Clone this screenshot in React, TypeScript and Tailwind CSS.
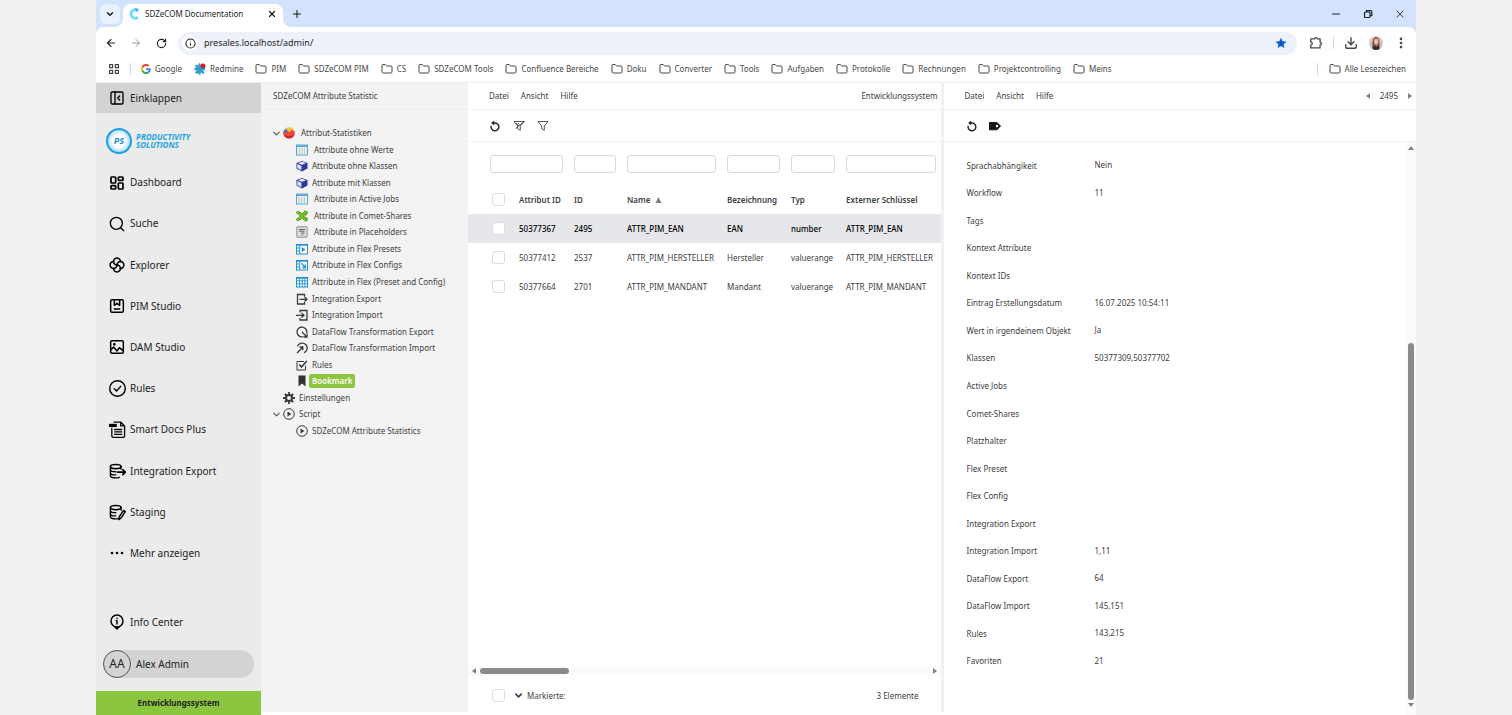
import React from 'react';
import {
    ArrowLeft,
    ArrowRight,
    ChevronDown,
    Download,
    EllipsisVertical,
    Folder,
    Info,
    LayoutDashboard,
    Minus,
    PanelLeftClose,
    Plus,
    RotateCw,
    X,
} from 'lucide-react';

type IconProps = { className?: string; children: React.ReactNode; strokeWidth?: number };

const Svg: React.FC<IconProps> = ({ className = 'w-4 h-4', strokeWidth = 2, children }) => (
    <svg
        viewBox="0 0 24 24"
        className={className}
        fill="none"
        stroke="currentColor"
        strokeWidth={strokeWidth}
        strokeLinecap="round"
        strokeLinejoin="round"
        aria-hidden="true"
    >
        {children}
    </svg>
);

/* ---------- Browser chrome ---------- */

const GoogleIcon = () => (
    <svg viewBox="0 0 48 48" className="w-[10px] h-[10px]" aria-hidden="true">
        <path fill="#ea4335" d="M24 9.5c3.5 0 6.7 1.2 9.2 3.6l6.9-6.9C35.9 2.4 30.5 0 24 0 14.6 0 6.5 5.4 2.6 13.2l8 6.2C12.4 13.7 17.7 9.5 24 9.5z" />
        <path fill="#4285f4" d="M47 24.5c0-1.6-.2-3.1-.4-4.5H24v9h13c-.6 3-2.3 5.5-4.8 7.2l7.7 6C44.4 38 47 31.8 47 24.5z" />
        <path fill="#fbbc05" d="M10.5 28.6c-.5-1.5-.8-3-.8-4.6s.3-3.1.8-4.6l-8-6.2C.9 16.5 0 20.1 0 24s.9 7.5 2.6 10.8z" />
        <path fill="#34a853" d="M24 48c6.5 0 11.9-2.1 15.9-5.8l-7.7-6c-2.2 1.5-4.9 2.3-8.2 2.3-6.3 0-11.6-4.2-13.5-9.9l-8 6.2C6.5 42.6 14.6 48 24 48z" />
    </svg>
);

const RedmineIcon = () => (
    <svg viewBox="0 0 24 24" className="w-3 h-3" aria-hidden="true">
        <g stroke="#2f9fd0" strokeWidth="5" strokeLinecap="round">
            <path d="M11 3v18M3 12h17M5 6l13 13M5 19 17 7" />
        </g>
        <circle cx="18" cy="6" r="5" fill="#d5202a" />
    </svg>
);

const FolderIcon = () => <Folder className="w-3 h-3 text-[#474747]" strokeWidth={2} />;

const bookmarks = [
    'PIM',
    'SDZeCOM PIM',
    'CS',
    'SDZeCOM Tools',
    'Confluence Bereiche',
    'Doku',
    'Converter',
    'Tools',
    'Aufgaben',
    'Protokolle',
    'Rechnungen',
    'Projektcontrolling',
    'Meins',
];

const BrowserBar: React.FC = () => (
    <header className="shrink-0 bg-[#d3e3fd] text-[#1f1f1f]">
        {/* Tab strip */}
        <div className="flex items-center h-[27px] pl-1 pr-[10px]">
            <button aria-label="Tabs durchsuchen" className="flex items-center justify-center w-5 h-5 rounded-md bg-[#e9f0fe]">
                <ChevronDown className="w-[10px] h-[10px]" strokeWidth={3.5} />
            </button>
            <div className="relative flex items-center self-end w-[160px] h-[23px] ml-[3px] pl-[6px] pr-[6px] pb-[3px] bg-white rounded-t-lg">
                <svg viewBox="0 0 8 8" className="absolute -left-2 bottom-0 w-2 h-2" aria-hidden="true">
                    <path d="M8 0v8H0a8 8 0 0 0 8-8z" fill="#fff" />
                </svg>
                <svg viewBox="0 0 8 8" className="absolute -right-2 bottom-0 w-2 h-2" aria-hidden="true">
                    <path d="M0 0v8h8a8 8 0 0 1-8-8z" fill="#fff" />
                </svg>
                <svg viewBox="0 0 24 24" className="w-3 h-3" fill="none" strokeWidth="6" aria-hidden="true">
                    <path d="M18 5.500a8.500 8.500 0 1 0 0 13" stroke="#74dcfa" />
                    <path d="M12 3.500A8.500 8.500 0 0 1 18 5.500" stroke="#3cc0ec" />
                </svg>
                <span className="ml-[4px] text-[8px] whitespace-nowrap">SDZeCOM Documentation</span>
                <button aria-label="Tab schließen" className="ml-auto">
                    <X className="w-[10px] h-[10px]" strokeWidth={3} />
                </button>
            </div>
            <button aria-label="Neuer Tab" className="ml-2">
                <Plus className="w-3 h-3" strokeWidth={2.2} />
            </button>
            <div className="flex items-center gap-5 ml-auto">
                <button aria-label="Minimieren">
                    <Minus className="w-3 h-3" />
                </button>
                <button aria-label="Verkleinern">
                    <svg viewBox="0 0 12 12" className="w-3 h-3" fill="none" stroke="currentColor" strokeWidth="1.2" aria-hidden="true">
                        <rect x="2.500" y="4" width="5.500" height="5.500" rx="1" />
                        <path d="M4.500 4V2.600h4.400l.9.900v4.200H8" />
                    </svg>
                </button>
                <button aria-label="Schließen">
                    <X className="w-3 h-3" strokeWidth={1.7} />
                </button>
            </div>
        </div>

        <div className="bg-white rounded-t-lg">
            {/* Address bar */}
            <div className="flex items-center gap-[9px] h-8 px-[7px]">
                <button aria-label="Zurück" className="flex justify-center w-4">
                    <ArrowLeft className="w-3 h-3" strokeWidth={2.2} />
                </button>
                <button aria-label="Vor" className="flex justify-center w-4 text-[#9b9b9b]">
                    <ArrowRight className="w-3 h-3" strokeWidth={2} />
                </button>
                <button aria-label="Neu laden" className="flex justify-center w-4">
                    <RotateCw className="w-[11px] h-[11px]" strokeWidth={2.5} />
                </button>
                <div className="flex items-center flex-1 h-[23px] pl-1 pr-[10px] rounded-full bg-[#edf1fa]">
                    <button aria-label="Website-Informationen" className="flex items-center justify-center w-4 h-4 rounded-full bg-white">
                        <Info className="w-[11px] h-[11px]" strokeWidth={2.2} />
                    </button>
                    <input
                        aria-label="Adresse"
                        defaultValue="presales.localhost/admin/"
                        className="flex-1 min-w-0 ml-[6px] text-[9px] bg-transparent outline-none"
                    />
                    <button aria-label="Lesezeichen bearbeiten">
                        <svg viewBox="0 0 24 24" className="w-3 h-3" fill="#0b57d0" aria-hidden="true">
                            <path d="m12 1.500 3.100 7.200 7.900.7-6 5.100 1.900 7.700L12 18.100l-6.900 4.100L7 14.500 1 9.400l7.900-.7z" />
                        </svg>
                    </button>
                </div>
                <button aria-label="Erweiterungen" className="flex justify-center w-4 ml-[2px] text-[#474747]">
                    <Svg className="w-[14px] h-[14px]" strokeWidth={2.2}>
                        <path d="M3 5h6.500a2.300 2.300 0 0 1 4.600 0H19v5.500a2.300 2.300 0 0 1 0 4.600V20.500H3V15.500a2.600 2.600 0 0 0 0-5.200z" />
                    </Svg>
                </button>
                <span className="w-px h-3 bg-[#c4d9fb]" />
                <button aria-label="Downloads" className="flex justify-center w-4 text-[#474747]">
                    <Download className="w-[14px] h-[14px]" strokeWidth={2.4} />
                </button>
                <button aria-label="Profil" className="flex justify-center w-4">
                    <svg viewBox="0 0 14 14" className="w-[14px] h-[14px]" aria-hidden="true">
                        <circle cx="7" cy="7" r="7" fill="#cfc8c6" />
                        <path d="M3.500 12.500C3 8 3 1.500 7.200 1.300 11 1.500 10.800 8 10.500 12.500z" fill="#8a5240" />
                        <ellipse cx="7.200" cy="5.600" rx="2.200" ry="2.900" fill="#e8bfad" />
                        <path d="M3.500 13c.5-3 1.800-3.700 3.700-3.700s3 .9 3.400 3.600A7 7 0 0 1 3.500 13z" fill="#2d2a33" />
                        <path d="m6.300 8.500.9 2.500.9-2.500z" fill="#e3b49f" />
                    </svg>
                </button>
                <button aria-label="Menü" className="flex justify-center w-4 text-[#474747]">
                    <EllipsisVertical className="w-[14px] h-[14px]" strokeWidth={2.5} />
                </button>
            </div>

            {/* Bookmarks */}
            <nav className="flex items-center h-5 pl-[13px] pr-[10px] mb-[3px] text-[8px] text-[#474747] whitespace-nowrap">
                <button aria-label="Apps">
                    <svg viewBox="0 0 10 10" className="w-[10px] h-[10px]" fill="none" stroke="currentColor" strokeWidth="1.2" aria-hidden="true">
                        <path d="M.6.6h3v3h-3zM6.400.6h3v3h-3zM.6 6.400h3v3h-3zM6.400 6.400h3v3h-3z" />
                    </svg>
                </button>
                <span className="w-px h-3 ml-[11px] mr-[10px] bg-[#c4d9fb]" />
                <div className="flex items-center gap-3">
                    <a href="#google" className="flex items-center gap-1">
                        <GoogleIcon />
                        Google
                    </a>
                    <a href="#redmine" className="flex items-center gap-1">
                        <RedmineIcon />
                        Redmine
                    </a>
                    {bookmarks.map((name) => (
                        <a key={name} href="#folder" className="flex items-center gap-1">
                            <FolderIcon />
                            {name}
                        </a>
                    ))}
                </div>
                <span className="w-px h-3 ml-auto mr-[11px] bg-[#c4d9fb]" />
                <a href="#alle" className="flex items-center gap-1">
                    <FolderIcon />
                    Alle Lesezeichen
                </a>
            </nav>
            <div className="h-px bg-[#ededed]" />
        </div>
    </header>
);

/* ---------- Main navigation ---------- */

const DatabaseStack = () => (
    <>
        <ellipse cx="9.500" cy="5" rx="7.500" ry="3" />
        <path d="M2 5v4.500c0 1.500 3 2.800 7.500 2.800M2 9.500V14c0 1.500 3 2.800 7.500 2.800M2 14v4c0 1.700 3.200 3 7.500 3 2 0 3.500-.3 5-.8M17 5v3.500" />
    </>
);

const navItems: { label: string; icon: React.ReactNode }[] = [
    { label: 'Dashboard', icon: <LayoutDashboard className="w-4 h-4" strokeWidth={2.6} /> },
    {
        label: 'Suche',
        icon: (
            <Svg className="w-4 h-4">
                <circle cx="11" cy="11" r="9" />
                <path d="m22 22-4.500-4.500" />
            </Svg>
        ),
    },
    {
        label: 'Explorer',
        icon: (
            <Svg className="w-4 h-4" strokeWidth={2.2}>
                <path d="M17.200 7.200A5.200 5.200 0 1 0 12 12" />
                <path d="M16.800 17.200A5.200 5.200 0 1 0 12 12" />
                <path d="M6.800 16.800A5.200 5.200 0 1 0 12 12" />
                <path d="M7.200 6.800A5.200 5.200 0 1 0 12 12" />
            </Svg>
        ),
    },
    {
        label: 'PIM Studio',
        icon: (
            <Svg className="w-4 h-4" strokeWidth={2.2}>
                <rect x="2.500" y="2.500" width="19" height="19" rx="2" />
                <path d="M8 3v8l4-3 4 3V3M8 16.500h8" />
            </Svg>
        ),
    },
    {
        label: 'DAM Studio',
        icon: (
            <Svg className="w-4 h-4" strokeWidth={2.2}>
                <rect x="2.500" y="2.500" width="19" height="19" rx="2" />
                <circle cx="8" cy="8" r="1" />
                <path d="m3 16 4-4 5 6 3.500-5 5.500 4.500" />
            </Svg>
        ),
    },
    {
        label: 'Rules',
        icon: (
            <Svg className="w-[17px] h-[17px]">
                <circle cx="12" cy="12" r="11" />
                <path d="m7.500 12.500 3.200 3 5.800-6.500" />
            </Svg>
        ),
    },
    {
        label: 'Smart Docs Plus',
        icon: (
            <Svg className="w-[17px] h-[17px]" strokeWidth={1.8}>
                <path d="M4 10v11a2 2 0 0 0 2 2h14a2 2 0 0 0 2-2V7l-5.500-5.500H7M16.500 1.500V7H22M8 12h10M8 15.500h10M8 19h10" />
                <path d="M0 4h11v4.500H0z" fill="currentColor" stroke="none" />
            </Svg>
        ),
    },
    {
        label: 'Integration Export',
        icon: (
            <Svg className="w-[17px] h-[17px]">
                <DatabaseStack />
                <path d="M12 13h11M19.500 9.500 23 13l-3.500 3.500" strokeWidth="2.400" />
            </Svg>
        ),
    },
    {
        label: 'Staging',
        icon: (
            <Svg className="w-[17px] h-[17px]">
                <DatabaseStack />
                <path d="m14 22 .5-4 6-9 2.500 1.800-6 9z" />
            </Svg>
        ),
    },
    {
        label: 'Mehr anzeigen',
        icon: (
            <svg viewBox="0 0 14 14" className="w-[14px] h-[14px]" fill="currentColor" aria-hidden="true">
                <circle cx="2" cy="7" r="1.300" />
                <circle cx="7" cy="7" r="1.300" />
                <circle cx="12" cy="7" r="1.300" />
            </svg>
        ),
    },
];

const NavLink: React.FC<{ label: string; icon: React.ReactNode }> = ({ label, icon }) => (
    <a href="#nav" className="flex items-center flex-1 min-h-0 pl-2">
        <span className="flex justify-center w-[26px] text-black">{icon}</span>
        {label}
    </a>
);

const Sidebar: React.FC = () => (
    <aside className="flex flex-col w-[165px] shrink-0 bg-[#ebebeb] text-[10px] text-[#222]">
        <button className="flex items-center h-[30px] pl-2 bg-[#d3d3d3]">
            <span className="flex justify-center w-[26px] text-black">
                <PanelLeftClose className="w-4 h-4" strokeWidth={2} />
            </span>
            Einklappen
        </button>
        <div className="flex items-center gap-1 h-[49px] pt-[7px] pl-[10px]">
            <span className="flex items-center justify-center w-[26px] h-[26px] rounded-full border-2 border-[#1b9fe0] bg-radial from-white from-40% to-[#4fbcf0] text-[9px] font-bold italic text-[#1b8fd0]">
                PS
            </span>
            <span className="flex flex-col font-['Open_Sans',sans-serif] text-[8px] leading-[8px] font-bold italic text-[#1ba4e4]">
                <span>PRODUCTIVITY</span>
                <span>SOLUTIONS</span>
            </span>
        </div>
        <nav className="flex flex-col flex-1 min-h-0">
            {navItems.map((item) => (
                <NavLink key={item.label} {...item} />
            ))}
        </nav>
        <div className="flex h-10 mt-7">
            <NavLink
                label="Info Center"
                icon={
                    <Svg className="w-4 h-4" strokeWidth={2.2}>
                        <circle cx="12" cy="10.500" r="9" />
                        <path d="M12 10v5M11 10h1M12 6.500v.1" />
                        <path d="M7 19 12 24l5-5z" fill="currentColor" stroke="none" />
                    </Svg>
                }
            />
        </div>
        <button className="flex items-center gap-[5px] h-7 mt-2 mb-[13px] ml-[7px] mr-[7px] rounded-full bg-[#d3d3d3]">
            <span className="flex items-center justify-center w-7 h-7 rounded-full border border-[#555] text-[12px]">AA</span>
            Alex Admin
        </button>
        <div className="flex items-center justify-center h-6 bg-[#8cc63e] text-[8px] font-bold">Entwicklungssystem</div>
    </aside>
);

/* ---------- Tree ---------- */

const BlueTable: React.FC<{ children?: React.ReactNode }> = ({ children }) => (
    <svg viewBox="0 0 12 12" className="w-3 h-3" fill="none" stroke="#2191d0" aria-hidden="true">
        <rect x=".5" y="1.500" width="11" height="9.500" fill="#fff" />
        <path d="M.5 2h11" strokeWidth="1.400" />
        {children}
    </svg>
);

const CalendarIcon: React.FC<{ colored?: boolean }> = ({ colored }) => (
    <svg viewBox="0 0 12 12" className="w-3 h-3" fill="none" aria-hidden="true">
        <rect x=".5" y="1" width="11" height="10" fill="#eaf4fa" stroke="#5fa4cf" />
        <path d="M.5 2.200h11" stroke="#4a9bd0" strokeWidth="1.500" />
        {colored ? (
            <>
                <path d="M2.500 5h7" stroke="#e2873c" strokeDasharray="1.200 1.500" strokeWidth="1.200" />
                <path d="M2.500 7h7" stroke="#8c7bd0" strokeDasharray="1.200 1.500" strokeWidth="1.200" />
                <path d="M2.500 9h7" stroke="#6bb64f" strokeDasharray="1.200 1.500" strokeWidth="1.200" />
            </>
        ) : (
            <>
                <path d="M3.500 4v6.500M6 4v6.500M8.500 4v6.500" stroke="#a5bcc9" strokeWidth=".8" />
                <path d="M1 5h10M1 7h10M1 9h10" stroke="#d4ddbd" strokeWidth=".6" />
            </>
        )}
    </svg>
);

const CubeIcon = () => (
    <svg viewBox="0 0 12 12" className="w-3 h-3" aria-hidden="true">
        <path d="M6 1 11.500 3v5.500L6 11.500.5 8.500V3z" fill="#2c3a9e" />
        <path d="M6 1.800 10 3.200 6 4.800 2 3.200z" fill="#eef0fb" />
        <path d="M1.300 4 5.400 5.700v4.600L1.300 8z" fill="#dfe3f6" />
    </svg>
);

const PieIcon = () => (
    <svg viewBox="0 0 12 12" className="w-3 h-3" aria-hidden="true">
        <path d="M.5 4.500v2.800C.8 10 3 11.500 6 11.500s5.200-1.500 5.500-4.200V4.500z" fill="#c9251f" />
        <ellipse cx="6" cy="5.500" rx="5.500" ry="3.800" fill="#f0483c" />
        <path d="M6 5.500 2.300 1.300C4.500-.2 8-.2 10.200 1.500z" fill="#f7c930" />
        <path d="M6 5.500.6 5C.6 3.500 1.500 2.500 2.700 2z" fill="#3f74c9" />
    </svg>
);

const CometIcon = () => (
    <svg viewBox="0 0 12 12" className="w-3 h-3" fill="none" strokeLinecap="round" aria-hidden="true">
        <path d="M1.800 2.500C5 2.500 7 9.500 10.200 9.500M1.800 9.500C5 9.500 7 2.500 10.200 2.500" stroke="#3f8f12" strokeWidth="3" />
        <path d="m9 1 2.200 1.600L9.500 5M9 7.200l2.200 1.600L9.500 11" stroke="#4fa51a" strokeWidth="1.400" />
        <path d="M1.800 2.500C5 2.500 7 9.500 10.200 9.500M1.800 9.500C5 9.500 7 2.500 10.200 2.500" stroke="#82cc2b" strokeWidth="1.600" />
    </svg>
);

const PlaceholderIcon = () => (
    <svg viewBox="0 0 12 12" className="w-3 h-3" fill="none" stroke="#8f8f8f" aria-hidden="true">
        <rect x=".8" y=".8" width="10.400" height="10.400" rx=".5" fill="#dcdcdc" />
        <path d="M3 3.500h6M3 5.200h5.500M5 7h3.500M5.500 9h1.500" stroke="#666" />
    </svg>
);

const PlayIcon = () => (
    <svg viewBox="0 0 12 12" className="w-3 h-3" fill="none" stroke="#3a3a3a" aria-hidden="true">
        <circle cx="6" cy="6" r="5.300" />
        <path d="M4.500 3.500 8.500 6 4.500 8.500z" fill="#3a3a3a" stroke="none" />
    </svg>
);

const GearIcon = () => (
    <svg viewBox="0 0 12 12" className="w-3 h-3" fill="none" stroke="#3a3a3a" aria-hidden="true">
        <circle cx="6" cy="6" r="3" strokeWidth="2" />
        <path d="M6 0v2.500M6 9.500V12M0 6h2.500M9.500 6H12M1.800 1.800l1.700 1.700M8.500 8.500l1.700 1.700M1.800 10.200l1.700-1.700M8.500 3.500l1.700-1.700" strokeWidth="1.800" />
    </svg>
);

const Dark: React.FC<{ children: React.ReactNode }> = ({ children }) => (
    <svg viewBox="0 0 12 12" className="w-3 h-3" fill="none" stroke="#3a3a3a" strokeWidth="1.300" aria-hidden="true">
        {children}
    </svg>
);

type TreeItem = { label: string; icon: React.ReactNode; root?: boolean; open?: boolean; wide?: boolean; active?: boolean };

const treeItems: TreeItem[] = [
    { label: 'Attribut-Statistiken', icon: <PieIcon />, root: true, open: true, wide: true },
    { label: 'Attribute ohne Werte', icon: <CalendarIcon />, wide: true },
    { label: 'Attribute ohne Klassen', icon: <CubeIcon /> },
    { label: 'Attribute mit Klassen', icon: <CubeIcon /> },
    { label: 'Attribute in Active Jobs', icon: <CalendarIcon colored />, wide: true },
    { label: 'Attribute in Comet-Shares', icon: <CometIcon />, wide: true },
    { label: 'Attribute in Placeholders', icon: <PlaceholderIcon />, wide: true },
    {
        label: 'Attribute in Flex Presets',
        icon: (
            <BlueTable>
                <path d="M3.700 2v9M.5 5h3M.5 8h3" />
                <path d="M5.800 4 9.500 6.500 5.800 9z" fill="#2191d0" stroke="none" />
            </BlueTable>
        ),
    },
    {
        label: 'Attribute in Flex Configs',
        icon: (
            <BlueTable>
                <path d="M3.700 2v9M.5 5h3M.5 8h3" />
                <path d="M5.500 4.200 9 8.500M9.300 5.500v3.300H6" strokeWidth="1.300" />
            </BlueTable>
        ),
    },
    {
        label: 'Attribute in Flex (Preset and Config)',
        icon: (
            <BlueTable>
                <path d="M3.500 2v9M6.200 2v9M8.900 2v9M.5 4.800h11M.5 7.800h11" strokeWidth=".9" />
            </BlueTable>
        ),
    },
    {
        label: 'Integration Export',
        icon: (
            <Dark>
                <path d="M8.500 3.500v-2H1.500v9.500h7V9M3.500 6.300h7M8.500 4l2.500 2.300-2.500 2.300" />
            </Dark>
        ),
    },
    {
        label: 'Integration Import',
        icon: (
            <Dark>
                <path d="M4 3.500v-2h7v9.500H4V9M0 6.300h7.500M5.500 4 8 6.300 5.500 8.600" />
            </Dark>
        ),
    },
    {
        label: 'DataFlow Transformation Export',
        icon: (
            <Dark>
                <path d="M7 10.700A4.900 4.900 0 1 1 10.700 7M6 6l4.500 4.500M11 7.500V11H7.500" />
            </Dark>
        ),
    },
    {
        label: 'DataFlow Transformation Import',
        icon: (
            <Dark>
                <path d="M1.500 4.200A5 5 0 1 1 8 10.700M1 11l5.500-5.500M3.500 5h3.300v3.300" />
            </Dark>
        ),
    },
    {
        label: 'Rules',
        icon: (
            <Dark>
                <path d="M9.500 6.500V11h-8.500V2.500h7" strokeWidth="1" />
                <path d="M3.300 5.500 5.500 8l5.300-6" strokeWidth="1.600" />
            </Dark>
        ),
    },
    {
        label: 'Bookmark',
        active: true,
        icon: (
            <svg viewBox="0 0 12 12" className="w-3 h-3" fill="#333" aria-hidden="true">
                <path d="M2.500.5h7v11L6 8.500l-3.500 3z" />
            </svg>
        ),
    },
    { label: 'Einstellungen', icon: <GearIcon />, root: true },
    { label: 'Script', icon: <PlayIcon />, root: true, open: true },
    { label: 'SDZeCOM Attribute Statistics', icon: <PlayIcon /> },
];

const Tree: React.FC = () => (
    <section className="w-[207px] shrink-0 bg-[#f3f3f3] mb-[3px]">
        <h1 className="flex items-center h-[27px] pl-3 mr-1 border-b border-[#ebebeb]">SDZeCOM Attribute Statistic</h1>
        <ul className="grid auto-rows-fr h-[314px] mt-[15px]">
            {treeItems.map((item) => (
                <li key={item.label} className={item.root ? 'flex items-center pl-[10px]' : 'flex items-center pl-[35px]'}>
                    {item.root && (
                        <span className="w-3">{item.open && <ChevronDown className="w-[11px] h-[11px] text-[#555]" strokeWidth={2.5} />}</span>
                    )}
                    {item.icon}
                    <button
                        className={
                            item.active
                                ? 'ml-px px-[3px] h-[14px] rounded-xs bg-[#8cc63e] text-white font-semibold'
                                : item.wide
                                  ? 'ml-[6px]'
                                  : 'ml-1'
                        }
                    >
                        {item.label}
                    </button>
                </li>
            ))}
        </ul>
    </section>
);

/* ---------- Attribute table ---------- */

const MenuBar: React.FC<{ children: React.ReactNode }> = ({ children }) => (
    <div className="flex items-center gap-3 h-[27px] pl-[21px] pr-[3px] border-b border-[#f1f1f1]">
        <button>Datei</button>
        <button>Ansicht</button>
        <button>Hilfe</button>
        {children}
    </div>
);

const ReloadIcon = () => (
    <svg viewBox="0 0 12 12" className="w-3 h-3" fill="none" stroke="#222" strokeWidth="1.400" aria-hidden="true">
        <path d="M2.200 5.800A3.900 3.900 0 1 0 6 3H4" />
        <path d="M5.200.5v5L2.200 3z" fill="#222" stroke="none" />
    </svg>
);

const FilterIcon: React.FC<{ off?: boolean }> = ({ off }) => (
    <svg viewBox="0 0 12 12" className="w-3 h-3" fill="none" stroke="#444" strokeWidth=".9" strokeLinejoin="round" aria-hidden="true">
        <path d="M1 1.500h10L7.300 6v4.200l-2.600-1.400V6z" />
        {off && <path d="M2.500 8.500 11.500 1.500M3 3l2.500 2.500M5 3l1.500 1.500" />}
    </svg>
);

const columns = ['Attribut ID', 'ID', 'Name', 'Bezeichnung', 'Typ', 'Externer Schlüssel'];

const rows = [
    ['50377367', '2495', 'ATTR_PIM_EAN', 'EAN', 'number', 'ATTR_PIM_EAN'],
    ['50377412', '2537', 'ATTR_PIM_HERSTELLER', 'Hersteller', 'valuerange', 'ATTR_PIM_HERSTELLER'],
    ['50377664', '2701', 'ATTR_PIM_MANDANT', 'Mandant', 'valuerange', 'ATTR_PIM_MANDANT'],
];

const Checkbox: React.FC<{ label: string }> = ({ label }) => (
    <input type="checkbox" aria-label={label} className="block appearance-none w-[13px] h-[13px] rounded-[3px] border border-[#dcdce0] bg-white" />
);

const Triangle: React.FC<{ d: string; className?: string }> = ({ d, className = 'w-[6px] h-[6px] shrink-0' }) => (
    <svg viewBox="0 0 6 6" className={className} fill="#808080" aria-hidden="true">
        <path d={d} />
    </svg>
);

const AttributeTable: React.FC = () => (
    <section className="flex flex-col flex-1 min-w-0 bg-white">
        <MenuBar>
            <span className="ml-auto">Entwicklungssystem</span>
        </MenuBar>
        <div className="flex items-center gap-3 h-8 pl-[21px] border-b border-[#f1f1f1]">
            <button aria-label="Neu laden"><ReloadIcon /></button>
            <button aria-label="Filter löschen"><FilterIcon off /></button>
            <button aria-label="Filtern"><FilterIcon /></button>
        </div>
        <table className="w-full table-fixed text-left whitespace-nowrap">
            <colgroup>
                <col className="w-[51px]" />
                <col className="w-[55px]" />
                <col className="w-[53px]" />
                <col className="w-[100px]" />
                <col className="w-[64px]" />
                <col className="w-[55px]" />
                <col />
            </colgroup>
            <thead>
                <tr className="h-[43px]">
                    {columns.map((column, index) => (
                        <td key={column} colSpan={index === 0 ? 2 : 1} className={index === 0 ? 'pl-[22px] pr-[11px]' : index === 5 ? 'pr-[5px]' : 'pr-[11px]'}>
                            <input aria-label={`Filter ${column}`} className="block w-full h-[18px] px-1 rounded-[3px] border border-[#d9d9dc] outline-none" />
                        </td>
                    ))}
                </tr>
                <tr className="h-[29px]">
                    <td className="pl-6"><Checkbox label="Alle auswählen" /></td>
                    {columns.map((column) => (
                        <th key={column} className="font-semibold">
                            {column}
                            {column === 'Name' && <Triangle d="M0 6h6L3 0z" className="inline w-[7px] h-[6px] ml-[5px]" />}
                        </th>
                    ))}
                </tr>
            </thead>
            <tbody>
                {rows.map((row, index) => (
                    <tr key={row[0]} className={index === 0 ? 'h-[29px] bg-[#e6e7eb] text-black font-medium' : 'h-[29px]'}>
                        <td className="pl-6"><Checkbox label={`${row[0]} auswählen`} /></td>
                        {row.map((cell, i) => (
                            <td key={i}>{cell}</td>
                        ))}
                    </tr>
                ))}
            </tbody>
        </table>
        <div className="flex items-center gap-[6px] h-[10px] mt-auto px-[3px] bg-[#fbfbfb]">
            <Triangle d="M5 0v6L1 3z" />
            <div className="flex-1 h-[6px] -ml-[3px]">
                <div className="w-1/5 h-full rounded-full bg-[#8b8b8b]" />
            </div>
            <Triangle d="M1 0v6l4-3z" />
        </div>
        <div className="flex items-center h-[39px] pl-6 pr-[22px]">
            <Checkbox label="Markierte auswählen" />
            <button className="flex items-center gap-[3px] ml-2">
                <ChevronDown className="w-[11px] h-[11px]" strokeWidth={3.5} />
                Markierte:
            </button>
            <span className="ml-auto">3 Elemente</span>
        </div>
    </section>
);

/* ---------- Detail panel ---------- */

const details: [string, string][] = [
    ['Sprachabhängikeit', 'Nein'],
    ['Workflow', '11'],
    ['Tags', ''],
    ['Kontext Attribute', ''],
    ['Kontext IDs', ''],
    ['Eintrag Erstellungsdatum', '16.07.2025 10:54:11'],
    ['Wert in irgendeinem Objekt', 'Ja'],
    ['Klassen', '50377309,50377702'],
    ['Active Jobs', ''],
    ['Comet-Shares', ''],
    ['Platzhalter', ''],
    ['Flex Preset', ''],
    ['Flex Config', ''],
    ['Integration Export', ''],
    ['Integration Import', '1,11'],
    ['DataFlow Export', '64'],
    ['DataFlow Import', '145,151'],
    ['Rules', '143,215'],
    ['Favoriten', '21'],
];

const DetailPanel: React.FC = () => (
    <section className="flex flex-col flex-1 min-w-0 bg-white">
        <MenuBar>
            <div className="flex items-center gap-[9px] ml-auto">
                <button aria-label="Vorheriger"><Triangle d="M5 0v6L1 3z" /></button>
                2495
                <button aria-label="Nächster"><Triangle d="M1 0v6l4-3z" /></button>
            </div>
        </MenuBar>
        <div className="flex items-center gap-[11px] h-8 pl-[22px] border-b border-[#f1f1f1]">
            <button aria-label="Neu laden"><ReloadIcon /></button>
            <button aria-label="Tag">
                <svg viewBox="0 0 12 12" className="w-3 h-3" aria-hidden="true">
                    <path d="M.5 2.500h7.500L11.500 6 8 9.800H.5z" fill="#15181c" stroke="#15181c" strokeLinejoin="round" />
                    <circle cx="8" cy="6" r="1.200" fill="#fff" />
                </svg>
            </button>
        </div>
        <div className="flex flex-1 min-h-0">
            <dl className="flex flex-col flex-1 h-[533px] pt-[10px] pl-[23px]">
                {details.map(([label, value]) => (
                    <div key={label} className="flex items-center flex-1 min-h-0">
                        <dt className="w-32">{label}</dt>
                        <dd className="pb-px">{value}</dd>
                    </div>
                ))}
            </dl>
            <div className="flex flex-col items-center w-[10px] pt-[3px] pb-[7px] bg-[#fbfbfb]">
                <Triangle d="M0 5h6L3 1z" />
                <div className="flex flex-col justify-end flex-1 w-[6px] mb-[2px]">
                    <div className="h-[65%] rounded-full bg-[#8b8b8b]" />
                </div>
                <Triangle d="M0 1h6L3 5z" />
            </div>
        </div>
    </section>
);

const App: React.FC = () => (
    <div className="h-screen px-24 overflow-hidden bg-[#f0f0f0] font-['Noto_Sans',sans-serif]">
        <div className="flex flex-col h-full bg-white">
            <BrowserBar />
            <main className="flex flex-1 min-h-0 text-[8px] text-[#404040]">
                <Sidebar />
                <Tree />
                <AttributeTable />
                <div className="w-[3px] mb-[3px] bg-[#f1f1f1]" />
                <DetailPanel />
            </main>
        </div>
    </div>
);

export default App;
